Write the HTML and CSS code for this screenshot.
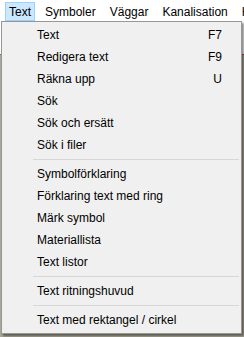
FILE: index.html
```html
<!DOCTYPE html>
<html lang="sv">
<head>
  <meta charset="UTF-8">
  <title>Text-meny</title>
  <link rel="stylesheet" href="styles.css">
</head>
<body>

  <!-- Menu bar -->
  <div class="menubar">
    <span class="menubar-item active">Text</span>
    <span class="menubar-item">Symboler</span>
    <span class="menubar-item">Väggar</span>
    <span class="menubar-item">Kanalisation</span>
    <span class="menubar-item">Hjälp</span>
  </div>

  <!-- Drawing area behind the menu -->
  <div class="canvas">
    <div class="red-line"></div>
  </div>

  <!-- Dropdown -->
  <div class="dropdown">
    <div class="item"><span>Text</span><span class="key">F7</span></div>
    <div class="item"><span>Redigera text</span><span class="key">F9</span></div>
    <div class="item"><span>Räkna upp</span><span class="key">U</span></div>
    <div class="item"><span>Sök</span></div>
    <div class="item"><span>Sök och ersätt</span></div>
    <div class="item"><span>Sök i filer</span></div>
    <div class="sep"></div>
    <div class="item"><span>Symbolförklaring</span></div>
    <div class="item"><span>Förklaring text med ring</span></div>
    <div class="item"><span>Märk symbol</span></div>
    <div class="item"><span>Materiallista</span></div>
    <div class="item"><span>Text listor</span></div>
    <div class="sep"></div>
    <div class="item"><span>Text ritningshuvud</span></div>
    <div class="sep"></div>
    <div class="item"><span>Text med rektangel / cirkel</span></div>
  </div>

</body>
</html>
```

FILE: styles.css
```css
* { box-sizing: border-box; }
body {
  margin: 0;
  width: 244px;
  height: 337px;
  overflow: hidden;
  position: relative;
  font-family: 'Liberation Sans', Arial, sans-serif;
  font-size: 12px;
  color: #000;
  background: #fff;
}

.menubar {
  height: 21px;
  display: flex;
  align-items: stretch;
  padding: 2px 0 0 2px;
  white-space: nowrap;
  overflow: hidden;
  background: #fff;
}

.menubar-item {
  display: flex;
  align-items: center;
  margin: 0 3px;
  padding: 0 3px;
  border: 1px solid transparent;
  flex-shrink: 0;
}

.menubar-item.active {
  background: #cce8ff;
  border-color: #99d1ff;
}

.canvas {
  height: 316px;
  background: #a9a795;
}

.red-line {
  height: 1px;
  margin-top: 33px;
  background: #c0504d;
}

.dropdown {
  position: absolute;
  left: 1px;
  top: 21px;
  width: 241px;
  padding: 2px;
  background: #f0f0f0;
  border: 1px solid #979797;
  box-shadow: 2px 2px 2px rgba(0, 0, 0, 0.45);
}

.item {
  height: 22px;
  display: flex;
  align-items: center;
  justify-content: space-between;
  padding: 0 17px 0 33px;
}

.key { text-align: right; }

.sep {
  height: 7px;
  margin-left: 29px;
  padding-top: 3px;
}

.sep::before {
  content: '';
  display: block;
  height: 1px;
  background: #d7d7d7;
}
```
